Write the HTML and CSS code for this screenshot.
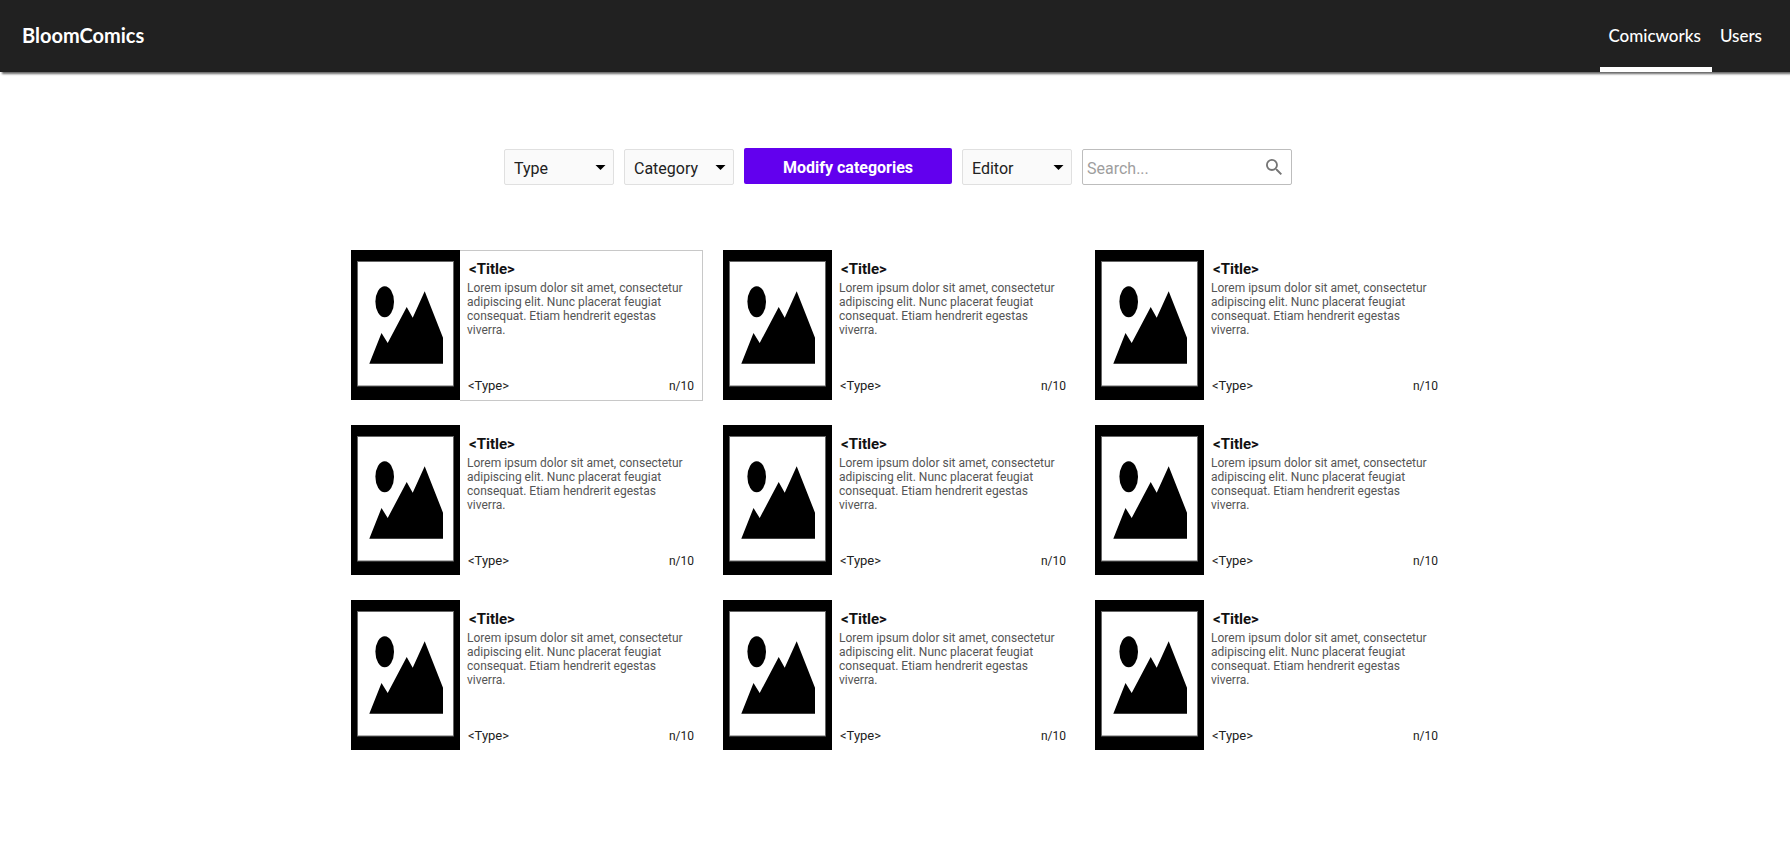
FILE: index.html
```html
<!DOCTYPE html>
<html lang="en">
<head>
<meta charset="utf-8">
<title>BloomComics</title>
<link rel="stylesheet" href="styles.css">
</head>
<body>
<svg class="sprite" aria-hidden="true">
  <symbol id="cover" viewBox="0 0 109 150">
    <rect width="109" height="150" fill="#000"/>
    <rect x="6.5" y="11.5" width="96" height="124.500" fill="#fff" stroke="#666"/>
    <ellipse cx="33.700" cy="51.700" rx="9.300" ry="15.500"/>
    <path d="M18.300 113.700 30.500 83l6.200 10 19-36 6 10.700 12-26.400L92 87.700v26z"/>
  </symbol>
  <symbol id="caret" viewBox="0 0 10 5"><path d="M0 0h10L5 5z"/></symbol>
</svg>
<header class="topbar">
  <a class="brand" href="#">BloomComics</a>
  <nav class="nav">
    <a class="nav-link active" href="#" aria-current="page">Comicworks</a>
    <a class="nav-link" href="#">Users</a>
  </nav>
</header>
<main class="page">
  <form class="filters">
    <div class="select"><select aria-label="Type"><option>Type</option></select><svg class="caret" aria-hidden="true"><use href="#caret"/></svg></div>
    <div class="select"><select aria-label="Category"><option>Category</option></select><svg class="caret" aria-hidden="true"><use href="#caret"/></svg></div>
    <button class="modify" type="button">Modify categories</button>
    <div class="select"><select aria-label="Editor"><option>Editor</option></select><svg class="caret" aria-hidden="true"><use href="#caret"/></svg></div>
    <div class="search">
      <input type="text" aria-label="Search" placeholder="Search...">
      <svg class="glass" viewBox="3 3 17.500 17.500" aria-hidden="true"><path d="M15.500 14h-.79l-.28-.27A6.471 6.471 0 0 0 16 9.500 6.500 6.500 0 1 0 9.500 16c1.610 0 3.090-.59 4.230-1.570l.27.28v.79l5 4.990L20.490 19l-4.990-5zm-6 0C7.010 14 5 11.990 5 9.500S7.010 5 9.500 5 14 7.010 14 9.500 11.990 14 9.500 14z"/></svg>
    </div>
  </form>
  <section class="grid" aria-label="Comicworks">
    <article class="card selected"><svg class="cover" aria-hidden="true"><use href="#cover"/></svg><div class="body"><h2>&lt;Title&gt;</h2><p>Lorem ipsum dolor sit amet, consectetur adipiscing elit. Nunc placerat feugiat consequat. Etiam hendrerit egestas viverra.</p><div class="meta"><span>&lt;Type&gt;</span><span class="count">n/10</span></div></div></article>
    <article class="card"><svg class="cover" aria-hidden="true"><use href="#cover"/></svg><div class="body"><h2>&lt;Title&gt;</h2><p>Lorem ipsum dolor sit amet, consectetur adipiscing elit. Nunc placerat feugiat consequat. Etiam hendrerit egestas viverra.</p><div class="meta"><span>&lt;Type&gt;</span><span class="count">n/10</span></div></div></article>
    <article class="card"><svg class="cover" aria-hidden="true"><use href="#cover"/></svg><div class="body"><h2>&lt;Title&gt;</h2><p>Lorem ipsum dolor sit amet, consectetur adipiscing elit. Nunc placerat feugiat consequat. Etiam hendrerit egestas viverra.</p><div class="meta"><span>&lt;Type&gt;</span><span class="count">n/10</span></div></div></article>
    <article class="card"><svg class="cover" aria-hidden="true"><use href="#cover"/></svg><div class="body"><h2>&lt;Title&gt;</h2><p>Lorem ipsum dolor sit amet, consectetur adipiscing elit. Nunc placerat feugiat consequat. Etiam hendrerit egestas viverra.</p><div class="meta"><span>&lt;Type&gt;</span><span class="count">n/10</span></div></div></article>
    <article class="card"><svg class="cover" aria-hidden="true"><use href="#cover"/></svg><div class="body"><h2>&lt;Title&gt;</h2><p>Lorem ipsum dolor sit amet, consectetur adipiscing elit. Nunc placerat feugiat consequat. Etiam hendrerit egestas viverra.</p><div class="meta"><span>&lt;Type&gt;</span><span class="count">n/10</span></div></div></article>
    <article class="card"><svg class="cover" aria-hidden="true"><use href="#cover"/></svg><div class="body"><h2>&lt;Title&gt;</h2><p>Lorem ipsum dolor sit amet, consectetur adipiscing elit. Nunc placerat feugiat consequat. Etiam hendrerit egestas viverra.</p><div class="meta"><span>&lt;Type&gt;</span><span class="count">n/10</span></div></div></article>
    <article class="card"><svg class="cover" aria-hidden="true"><use href="#cover"/></svg><div class="body"><h2>&lt;Title&gt;</h2><p>Lorem ipsum dolor sit amet, consectetur adipiscing elit. Nunc placerat feugiat consequat. Etiam hendrerit egestas viverra.</p><div class="meta"><span>&lt;Type&gt;</span><span class="count">n/10</span></div></div></article>
    <article class="card"><svg class="cover" aria-hidden="true"><use href="#cover"/></svg><div class="body"><h2>&lt;Title&gt;</h2><p>Lorem ipsum dolor sit amet, consectetur adipiscing elit. Nunc placerat feugiat consequat. Etiam hendrerit egestas viverra.</p><div class="meta"><span>&lt;Type&gt;</span><span class="count">n/10</span></div></div></article>
    <article class="card"><svg class="cover" aria-hidden="true"><use href="#cover"/></svg><div class="body"><h2>&lt;Title&gt;</h2><p>Lorem ipsum dolor sit amet, consectetur adipiscing elit. Nunc placerat feugiat consequat. Etiam hendrerit egestas viverra.</p><div class="meta"><span>&lt;Type&gt;</span><span class="count">n/10</span></div></div></article>
  </section>
</main>
</body>
</html>
```
FILE: styles.css
```css
* { box-sizing: border-box; }
body { margin: 0; background: #fff; color: #212121; font-family: Roboto, sans-serif; }
.sprite { display: none; }

.topbar {
  display: flex;
  justify-content: space-between;
  height: 72px;
  padding: 0 20px 0 22px;
  background: #212121;
  box-shadow: 2px 2px 2px rgba(0, 0, 0, 0.6);
  font-family: Lato, sans-serif;
}
.topbar a { display: flex; align-items: center; color: #fff; text-decoration: none; }
.brand { padding-bottom: 2px; font-size: 20px; font-weight: 700; }
.nav { display: flex; }
.nav-link {
  padding: 4px 8px 0;
  border-bottom: 5px solid transparent;
  font-size: 17px;
  font-weight: 500;
}
.nav-link.active { padding-right: 11px; border-bottom-color: #fff; }

.page { padding: 76px 0 40px 8px; }
.filters { display: flex; justify-content: center; align-items: flex-start; gap: 10px; padding-right: 2px; }
.select, .search { position: relative; margin-top: 1px; }
.select { width: 110px; }
.select select {
  appearance: none;
  width: 100%;
  height: 36px;
  padding: 2px 9px 0;
  border: 1px solid #e0e0e0;
  border-radius: 2px;
  background: #fafafa;
  color: #212121;
  font: 16px Roboto, sans-serif;
}
.caret { position: absolute; top: 16px; right: 8px; width: 11px; height: 5px; pointer-events: none; }
.modify {
  width: 208px;
  height: 36px;
  padding: 2px 6px 0;
  border: 0;
  border-radius: 2px;
  background: #6200ee;
  color: #fff;
  font: 700 16px Roboto, sans-serif;
}
.search { width: 210px; }
.search input {
  width: 100%;
  height: 36px;
  padding: 2px 36px 0 4px;
  border: 1px solid #bdbdbd;
  border-radius: 2px;
  background: #fff;
  font: 16px Roboto, sans-serif;
}
.search input::placeholder { color: #9e9e9e; opacity: 1; }
.glass { position: absolute; top: 10px; right: 10px; width: 16px; height: 16px; fill: #757575; pointer-events: none; }

.grid {
  display: grid;
  grid-template-columns: repeat(3, 352px);
  justify-content: center;
  gap: 24px 20px;
  margin-top: 65px;
}
.card { display: flex; min-height: 151px; }
.cover { flex: none; width: 109px; height: 150px; }
.body { display: flex; flex: 1; flex-direction: column; padding: 10px 8px 6px 7px; border: 1px solid transparent; border-left: 0; }
.selected .body { border-color: #c8c8c8; }
.body h2 { margin: 0; padding-left: 2px; color: #111; font-size: 15px; font-weight: 700; line-height: 16px; }
.body p { margin: 4px 0 0; color: #555; font-size: 12px; line-height: 14px; }
.meta { display: flex; justify-content: space-between; margin-top: auto; padding-left: 1px; font-size: 13px; line-height: 16px; }
.count { font-size: 12px; }
```
